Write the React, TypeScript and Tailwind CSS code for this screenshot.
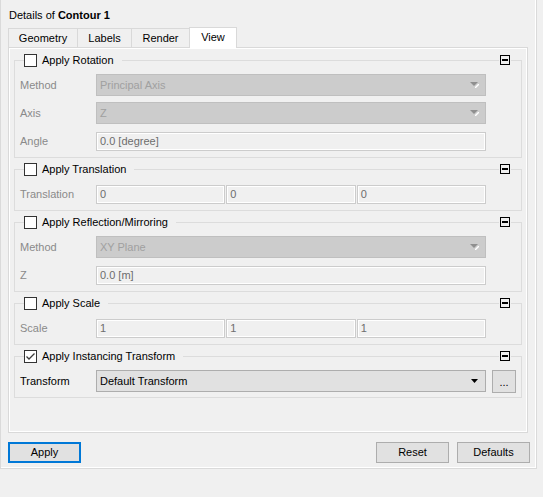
import React from 'react';

const FONT = { fontFamily: '"Liberation Sans", Arial, sans-serif' };

function Checkbox({ checked = false }: { checked?: boolean }) {
  return (
    <div className="w-[13px] h-[13px] border border-[#333333] bg-white flex items-center justify-center">
      {checked && (
        <svg width="11" height="11" viewBox="0 0 11 11">
          <path d="M1.5 5.5 L4 8 L9.5 2.5" stroke="#3a3a3a" strokeWidth="1.3" fill="none" />
        </svg>
      )}
    </div>
  );
}

function CollapseIcon() {
  return (
    <div className="w-[10px] h-[10px] border border-black bg-[#f0f0f0] flex items-center justify-center">
      <div className="w-[6px] h-[2px] bg-black" />
    </div>
  );
}

function Group({
  title,
  checked = false,
  className = '',
  children,
}: {
  title: string;
  checked?: boolean;
  className?: string;
  children: React.ReactNode;
}) {
  return (
    <div className={`flex flex-col ${className}`}>
      {/* header sitting on the top border line */}
      <div className="flex items-center h-[14px]">
        <div className="w-[10px] h-[7px] self-end border-l border-t border-[#dcdcdc]" />
        <Checkbox checked={checked} />
        <span className="ml-[5px] mr-[8px] text-black leading-none">{title}</span>
        <div className="flex-1 h-px bg-[#dcdcdc]" />
        <div className="px-[1px]">
          <CollapseIcon />
        </div>
        <div className="w-[11px] h-[7px] self-end border-r border-t border-[#dcdcdc]" />
      </div>
      <div className="border-l border-r border-b border-[#dcdcdc] pt-[4px] pb-[2px] pl-[5px] pr-[35px]">
        {children}
      </div>
    </div>
  );
}

function Row({ label, disabled = true, children }: { label: string; disabled?: boolean; children: React.ReactNode }) {
  return (
    <div className="flex items-center h-[28px]">
      <div className={`w-[76px] ${disabled ? 'text-[#8a8a8a]' : 'text-black'}`}>{label}</div>
      <div className="flex-1">{children}</div>
    </div>
  );
}

function DisabledSelect({ value }: { value: string }) {
  return (
    <div className="h-[22px] bg-[#cccccc] border border-[#bfbfbf] flex items-center pl-[3px] pr-[6px] text-[#a0a0a0]">
      <span className="flex-1">{value}</span>
      <svg width="9" height="6" viewBox="0 0 9 6">
        <path d="M0 0 H8 L4 4 Z" fill="#8f8f8f" />
        <path d="M5 5 L8 2 L9 2 L9 3 L6 6 L5 6 Z" fill="#ffffff" />
      </svg>
    </div>
  );
}

function DisabledInput({ value }: { value: string }) {
  return (
    <div className="h-[19px] bg-[#f0f0f0] border border-[#cccccc] shadow-[inset_1px_1px_0_#ffffff,inset_-1px_-1px_0_#ffffff] flex items-center pl-[3px] text-[#6d6d6d]">
      {value}
    </div>
  );
}

function Triple({ value }: { value: string }) {
  return (
    <div className="grid grid-cols-3 gap-[1px]">
      <DisabledInput value={value} />
      <DisabledInput value={value} />
      <DisabledInput value={value} />
    </div>
  );
}

const tabs = [
  { name: 'Geometry', w: 'w-[69px]' },
  { name: 'Labels', w: 'w-[54px]' },
  { name: 'Render', w: 'w-[58px]' },
];

export default function App() {
  return (
    <div className="w-[543px] h-[497px] bg-[#f0f0f0] text-[11px] text-black" style={FONT}>
      <div className="w-[537px] h-[469px] border-l border-r border-b border-[#dadada] shadow-[inset_-1px_-1px_0_#ffffff] pl-[7px] pr-[8px] pt-[8px]">
        <div className="h-[14px] leading-[14px] pl-[1px]">
          Details of <span className="font-bold">Contour 1</span>
        </div>

        {/* tabs */}
        <div className="flex items-end h-[21px] mt-[4px]">
          {tabs.map((t) => (
            <div
              key={t.name}
              className={`${t.w} h-[19px] border-l border-t border-[#d9d9d9] flex items-center justify-center bg-[#f0f0f0]`}
            >
              {t.name}
            </div>
          ))}
          <div className="w-[48px] h-[21px] border-l border-t border-r border-[#d9d9d9] bg-white flex items-center justify-center pb-[2px] -mb-px relative z-10">
            View
          </div>
        </div>

        {/* tab panel */}
        <div className="h-[386px] border border-[#d9d9d9] shadow-[inset_1px_1px_0_#ffffff,inset_-1px_-1px_0_#ffffff] pt-[5px] px-[5px]">
          <Group title="Apply Rotation">
            <Row label="Method">
              <DisabledSelect value="Principal Axis" />
            </Row>
            <Row label="Axis">
              <DisabledSelect value="Z" />
            </Row>
            <Row label="Angle">
              <DisabledInput value="0.0 [degree]" />
            </Row>
          </Group>

          <Group title="Apply Translation" className="mt-[4px]">
            <Row label="Translation">
              <Triple value="0" />
            </Row>
          </Group>

          <Group title="Apply Reflection/Mirroring" className="mt-[4px]">
            <Row label="Method">
              <DisabledSelect value="XY Plane" />
            </Row>
            <Row label="Z">
              <DisabledInput value="0.0 [m]" />
            </Row>
          </Group>

          <Group title="Apply Scale" className="mt-[4px]">
            <Row label="Scale">
              <Triple value="1" />
            </Row>
          </Group>

          <Group title="Apply Instancing Transform" checked className="mt-[4px]">
            <div className="flex items-center h-[28px] -mr-[30px]">
              <div className="w-[76px]">Transform</div>
              <div className="flex-1 h-[22px] bg-[#e1e1e1] border border-[#adadad] flex items-center pl-[3px] pr-[7px]">
                <span className="flex-1">Default Transform</span>
                <svg width="7" height="4" viewBox="0 0 7 4">
                  <path d="M0 0 H7 L3.5 4 Z" fill="#000000" />
                </svg>
              </div>
              <div className="w-[24px] h-[23px] ml-[6px] bg-[#e1e1e1] border border-[#adadad] flex items-center justify-center leading-none pt-[3px]">
                ...
              </div>
            </div>
          </Group>
        </div>

        {/* bottom buttons */}
        <div className="flex items-center mt-[9px]">
          <button className="w-[73px] h-[21px] bg-[#e1e1e1] border-2 border-[#0078d7] flex items-center justify-center">
            Apply
          </button>
          <div className="flex-1" />
          <button className="w-[73px] h-[21px] bg-[#e1e1e1] border border-[#adadad] flex items-center justify-center">
            Reset
          </button>
          <button className="w-[73px] h-[21px] ml-[8px] mr-[-2px] bg-[#e1e1e1] border border-[#adadad] flex items-center justify-center">
            Defaults
          </button>
        </div>
      </div>
    </div>
  );
}
